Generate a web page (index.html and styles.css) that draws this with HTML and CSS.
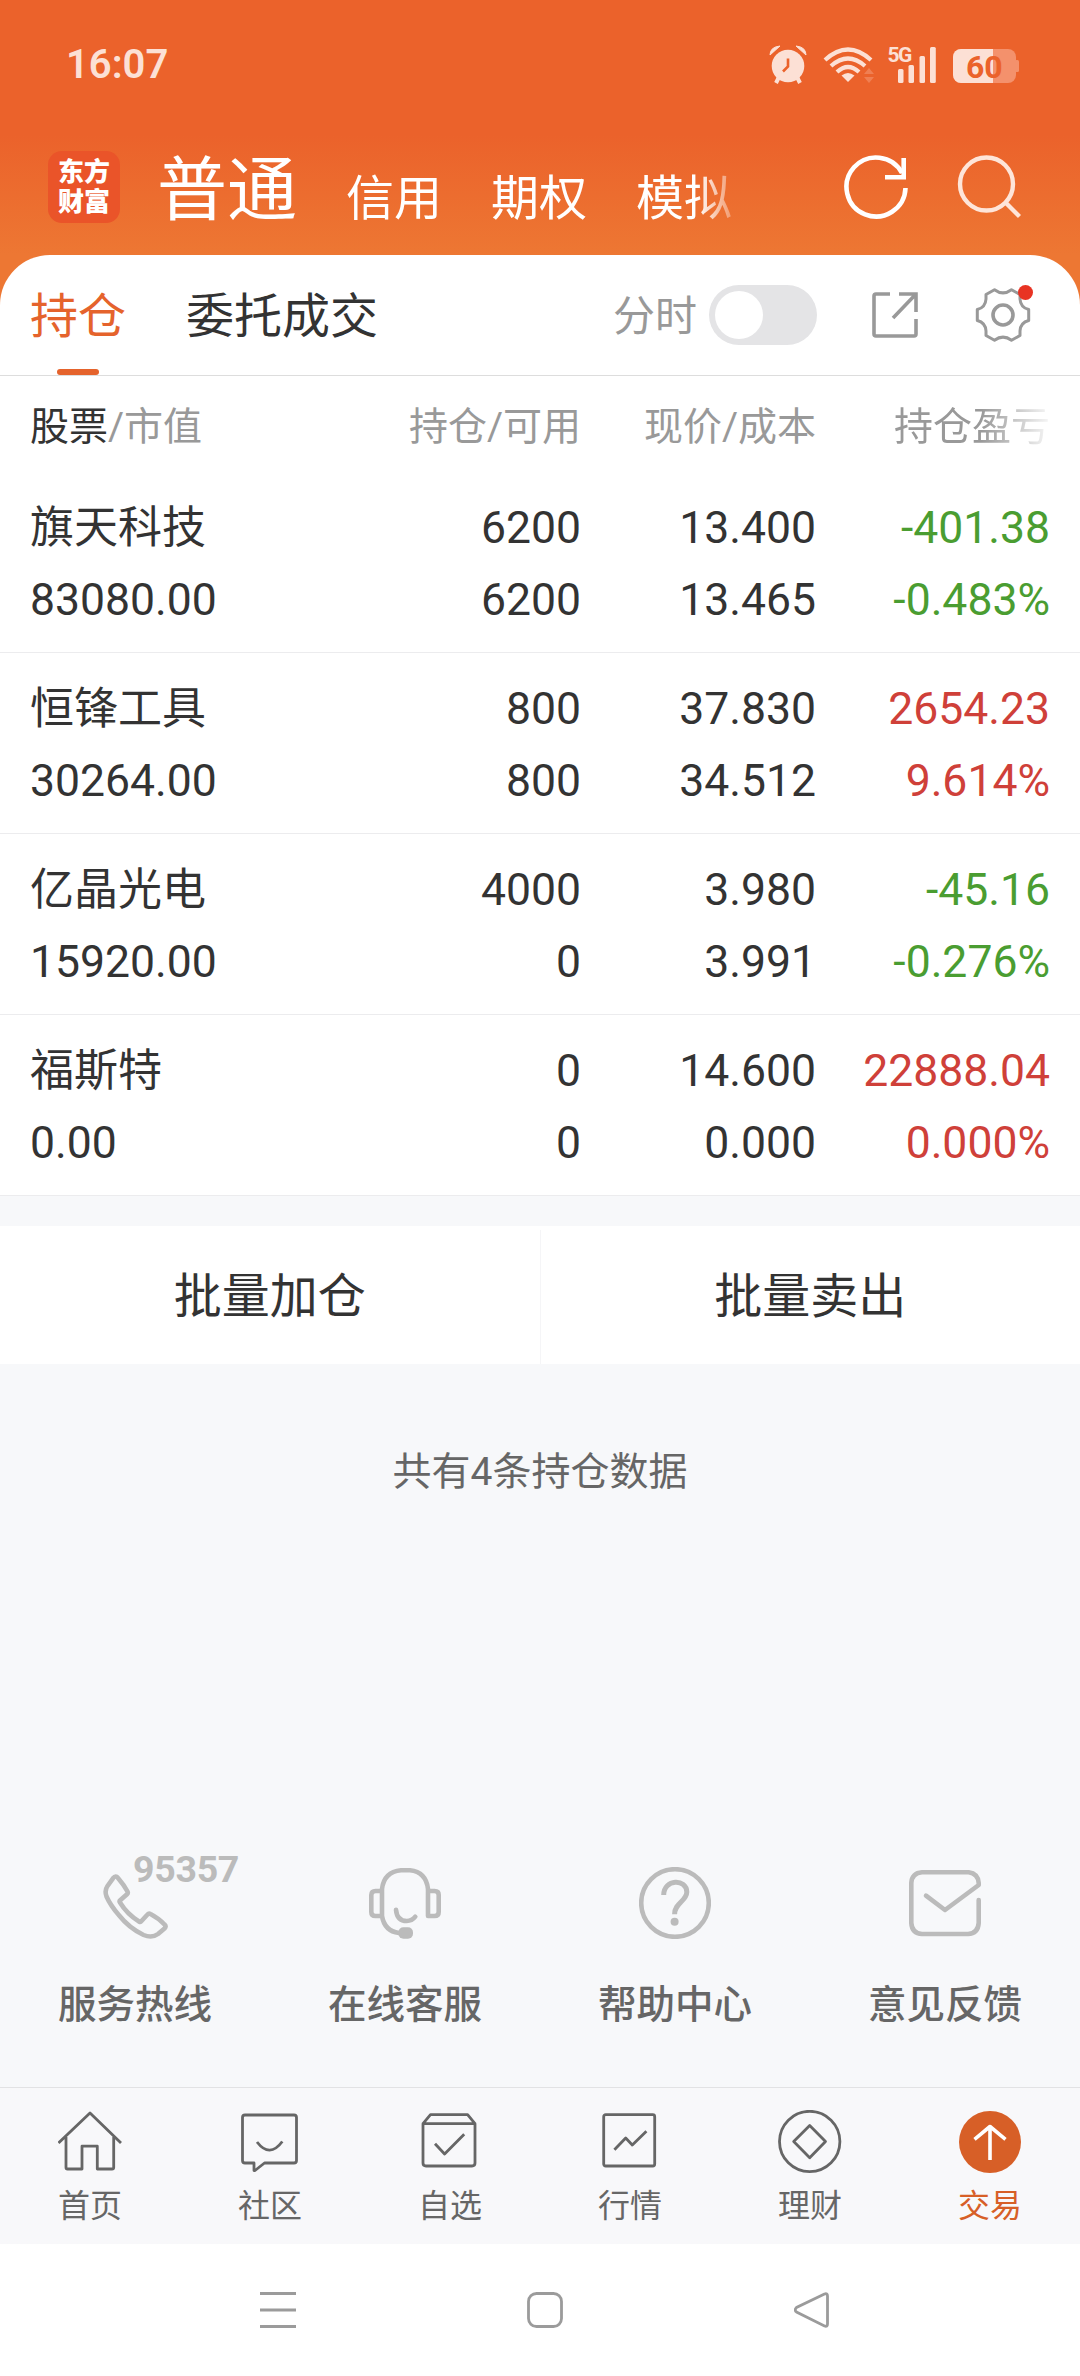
FILE: index.html
```html
<!DOCTYPE html>
<html lang="zh-CN">
<head>
    <meta charset="UTF-8">
    <meta name="viewport" content="width=device-width, initial-scale=1.0">
    <title>持仓</title>
    <link rel="stylesheet" href="styles.css">
</head>
<body>
    <div class="page">
        <div class="status-bar">
            <div class="time">16:07</div>
            <svg class="status-icons" width="256" height="44" viewBox="766 43 256 44">
                <g fill="#fce0d5">
                    <circle cx="788" cy="66" r="16.3"/>
                    <path d="M770 55q0-8 10-9zM806 55q0-8-10-9z" stroke="#fce0d5" stroke-linejoin="round"/>
                    <path d="M779 77l-3 6M797 77l3 6" stroke="#fce0d5" stroke-width="4"/>
                    <path d="M848 82l-6.500-6.500q6.500-5 13 0z"/>
                    <rect x="898" y="69" width="5.500" height="14" rx="1.500"/>
                    <rect x="908.500" y="65" width="5.500" height="18" rx="1.500"/>
                    <rect x="919.500" y="56" width="5.500" height="27" rx="1.500"/>
                    <rect x="930" y="47" width="5.800" height="36" rx="1.500"/>
                    <text x="887.500" y="62" class="net">5G</text>
                </g>
                <path d="M788 58.500v8l-5 5" fill="none" stroke="#eb622b" stroke-width="2.600"/>
                <g fill="none" stroke="#fce0d5" stroke-width="4.200">
                    <path d="M825 60q23-21 46 0M831 66q17-15 34 0M837 72q11-10 22 0"/>
                </g>
                <path d="M864 74l5-6 5 6zM864 77h10l-5 6z" fill="#f07f52"/>
                <rect x="953" y="49" width="63" height="34" rx="8" fill="#f4916c"/>
                <rect x="1015" y="60" width="4" height="12" rx="1.500" fill="#f4916c"/>
                <path d="M993 49h-32a8 8 0 0 0-8 8v18a8 8 0 0 0 8 8h32z" fill="#fce0d5"/>
                <text x="966" y="78" class="battery">60</text>
            </svg>
        </div>

        <div class="header">
            <div class="logo">东方<br>财富</div>
            <div class="accounts">
                <span class="current">普通</span>
                <span>信用</span>
                <span>期权</span>
                <span>模拟</span>
            </div>
            <svg class="refresh" width="66" height="66" viewBox="0 0 66 66" fill="none" stroke="#fff" stroke-width="4.600">
                <path d="M62.500 34A29.500 29.500 0 1 1 59 19"/>
                <path d="M60.700 4v19.300H42"/>
            </svg>
            <svg class="search" width="66" height="66" viewBox="0 0 66 66" fill="none" stroke="#fee5d9" stroke-width="4.400">
                <circle cx="31.500" cy="30" r="26.500"/>
                <path d="M50.500 48.500l14 14"/>
            </svg>
        </div>

        <div class="card">
            <div class="tabs">
                <div class="tab active">持仓</div>
                <div class="tab">委托成交</div>
                <div class="tools">
                    <span class="label">分时</span>
                    <div class="switch"></div>
                    <svg class="share" width="46" height="46" viewBox="0 0 46 46" fill="none" stroke="#999" stroke-width="3.600">
                        <path d="M18 2H4Q2 2 2 4v38q0 2 2 2h38q2 0 2-2V27"/>
                        <path d="M27 2h17v18M44 2L21 26"/>
                    </svg>
                    <div class="setting">
                        <svg width="56" height="56" viewBox="-28 -28 56 56" fill="none" stroke="#999" stroke-width="3" stroke-linejoin="round">
                            <circle r="10" stroke-width="3.600"/>
                            <path d="M-8.500-25.300Q0-19 8.500-25.300L17-20.500V-16Q17.500-7.500 25.700-5.500V5.500Q17.500 7.500 17 16V20.500L8.500 25.300Q0 19-8.500 25.300L-17 20.500V16Q-17.500 7.500-25.700 5.500V-5.500Q-17.500-7.500-17-16V-20.500Z"/>
                        </svg>
                        <i class="dot"></i>
                    </div>
                </div>
            </div>

            <div class="row head">
                <div><b>股票</b>/市值</div>
                <div>持仓/可用</div>
                <div>现价/成本</div>
                <div class="fade">持仓盈亏</div>
            </div>
            <div class="row">
                <div>旗天科技<br><span>83080.00</span></div>
                <div>6200<br>6200</div>
                <div>13.400<br>13.465</div>
                <div class="down">-401.38<br>-0.483%</div>
            </div>
            <div class="row">
                <div>恒锋工具<br><span>30264.00</span></div>
                <div>800<br>800</div>
                <div>37.830<br>34.512</div>
                <div class="up">2654.23<br>9.614%</div>
            </div>
            <div class="row">
                <div>亿晶光电<br><span>15920.00</span></div>
                <div>4000<br>0</div>
                <div>3.980<br>3.991</div>
                <div class="down">-45.16<br>-0.276%</div>
            </div>
            <div class="row">
                <div>福斯特<br><span>0.00</span></div>
                <div>0<br>0</div>
                <div>14.600<br>0.000</div>
                <div class="up">22888.04<br>0.000%</div>
            </div>
        </div>

        <div class="batch">
            <div>批量加仓</div>
            <div>批量卖出</div>
        </div>

        <div class="total">共有4条持仓数据</div>

        <div class="services">
            <div class="service">
                <svg width="72" height="72" viewBox="0 0 72 72">
                    <path d="M14 11.300Q16.700 8 19 11Q25 18 28.500 24.500Q29.300 26 28 27.200L21.500 33Q20 34 21 35.500Q28 47 40 54.500Q41.500 55.500 42.500 54L48.500 47.500Q49.800 46 51.500 47Q60 51.500 65.500 57.500Q67.500 59.500 65.500 61.500L59 67Q53 71.500 44.600 68Q30 61 19.800 48Q11.500 38.500 7.500 29.500Q5.300 23.500 8.500 19Z"/>
                </svg>
                <span class="phone-no">95357</span>
                <div>服务热线</div>
            </div>
            <div class="service">
                <svg width="72" height="72" viewBox="0 0 72 72">
                    <path d="M13 24H6.500Q2.300 24 2.300 28v17q0 4 4.200 4H13M59 24h6.500q4.200 0 4.200 4v17q0 4-4.200 4H59V22Q57 5 41 3.300H32Q15 5 13 22V49Q15.500 64 30 66"/>
                    <path d="M27 42.700Q28 54 37.700 54Q43 54 46.300 49.700"/>
                    <rect class="fill" x="29.400" y="60.300" width="14.600" height="11.400" rx="5"/>
                </svg>
                <div>在线客服</div>
            </div>
            <div class="service">
                <svg width="72" height="72" viewBox="0 0 72 72">
                    <circle cx="36" cy="36" r="33.800"/>
                    <path class="butt" d="M24.700 28C24.700 11.500 47.800 11.500 47.800 25C47.800 34 35.600 36 35.600 47.200"/>
                    <circle class="fill" cx="35.600" cy="54.700" r="4"/>
                </svg>
                <div>帮助中心</div>
            </div>
            <div class="service">
                <svg width="72" height="72" viewBox="0 0 72 72">
                    <path d="M17 28.700L36 43L69.700 18V16Q69 6.500 59.700 5.300H13Q3 6 2.300 16V56Q3 66.500 13 67H59Q69 66.500 69.700 56V33"/>
                </svg>
                <div>意见反馈</div>
            </div>
        </div>

        <div class="tabbar">
            <div class="item">
                <svg width="64" height="64" viewBox="0 0 64 64">
                    <path d="M.500 33L32 3L63 33M8 27V57.500Q8 59 9.500 59H24V36.200H39.300V59H54Q55.700 59 55.700 57.500V27"/>
                </svg>
                首页
            </div>
            <div class="item">
                <svg width="64" height="64" viewBox="0 0 64 64">
                    <path d="M7 5H56Q58.500 5 58.500 7.500V50.500Q58.500 53 56 53H26.500L17 60.500H16V53H7Q4.500 53 4.500 50.500V7.500Q4.500 5 7 5ZM19 32Q31.700 48.500 44.300 31.500"/>
                </svg>
                社区
            </div>
            <div class="item">
                <svg width="64" height="64" viewBox="0 0 64 64">
                    <path d="M5 13.700V53Q5 56 8 56H54Q57 56 57 53V13.700ZM5 13.700L12.500 4.700H49.600L57 13.700M17 33.700L26.600 44L46.200 24.300"/>
                </svg>
                自选
            </div>
            <div class="item">
                <svg width="64" height="64" viewBox="0 0 64 64">
                    <rect x="5.700" y="4.700" width="51" height="51.300" rx="2"/>
                    <path d="M16.400 39.700L27.700 28L34.300 35L48.400 21.300"/>
                </svg>
                行情
            </div>
            <div class="item">
                <svg width="64" height="64" viewBox="0 0 64 64">
                    <circle cx="31.700" cy="31.500" r="30.200"/>
                    <path d="M31.700 15.500L47.500 31.500L31.700 47.700L15.700 31.500Z"/>
                </svg>
                理财
            </div>
            <div class="item active">
                <svg width="64" height="64" viewBox="0 0 64 64">
                    <circle class="disc" cx="32" cy="32" r="31"/>
                    <path d="M32 50V17M16.500 29.300L32 16.500L47.500 29.300"/>
                </svg>
                交易
            </div>
        </div>

        <div class="sys-nav">
            <svg width="36" height="36" viewBox="0 0 36 36"><path d="M0 1.500H36M0 18H36M0 34.500H36"/></svg>
            <svg width="36" height="36" viewBox="0 0 36 36"><rect x="1.500" y="1.500" width="33" height="33" rx="8"/></svg>
            <svg width="36" height="36" viewBox="0 0 36 36"><path d="M30.500 2L2.500 15.500Q0 18 2.500 20L30.500 34Q33.500 35 33.500 32V4Q33.500 1 30.500 2Z"/></svg>
        </div>
    </div>
</body>
</html>
```

FILE: styles.css
```css
* {
    box-sizing: border-box;
}
body {
    margin: 0;
    font-family: Roboto, "Noto Sans CJK SC", sans-serif;
    color: #333;
    background: #f7f8fa;
}
svg {
    display: block;
    flex: none;
}
.page {
    width: 1080px;
    height: 2376px;
    display: flex;
    flex-direction: column;
    overflow: hidden;
    background: linear-gradient(#eb622b 0, #eb622b 135px, #ed7733 255px, #ed7733 320px, #f7f8fa 320px);
}

/* status bar */
.status-bar {
    height: 130px;
    padding: 0 58px 0 66px;
    display: flex;
    align-items: center;
    justify-content: space-between;
}
.time {
    font-size: 40px;
    font-weight: 600;
    line-height: 48px;
    color: #fce0d5;
}
.net {
    font-size: 21px;
    font-weight: 700;
    letter-spacing: -1.5px;
}
.battery {
    font-size: 32px;
    font-weight: 700;
    fill: #eb622b;
}

/* header */
.header {
    height: 125px;
    padding: 0 59px 11px 48px;
    display: flex;
    align-items: center;
    color: #fff;
}
.logo {
    width: 72px;
    height: 72px;
    padding-top: 6px;
    border-radius: 14px;
    background: #ea5429;
    font-size: 26px;
    font-weight: 900;
    line-height: 30px;
    text-align: center;
}
.accounts {
    width: 625px;
    margin-left: 37px;
    padding-top: 15px;
    display: flex;
    align-items: baseline;
    gap: 49px;
    font-size: 48px;
    line-height: 80px;
    white-space: nowrap;
    -webkit-mask-image: linear-gradient(90deg, #000 540px, transparent 590px);
    mask-image: linear-gradient(90deg, #000 540px, transparent 590px);
}
.accounts .current {
    font-size: 70px;
}
.refresh {
    margin-left: 61px;
}
.search {
    margin-left: auto;
}

/* card */
.card {
    background: #fff;
    border-radius: 50px 50px 0 0;
}
.tabs {
    height: 121px;
    padding: 0 49px 0 30px;
    display: flex;
    gap: 60px;
    border-bottom: 1px solid #ddd;
}
.tab {
    padding-top: 3px;
    font-size: 48px;
    line-height: 117px;
    height: 120px;
    position: relative;
}
.tab.active {
    color: #e5632c;
}
.tab.active::after {
    content: "";
    position: absolute;
    left: 27px;
    bottom: 0;
    width: 42px;
    height: 6px;
    border-radius: 3px;
    background: #e5632c;
}
.tools {
    margin-left: auto;
    display: flex;
    align-items: center;
}
.tools .label {
    padding-top: 4px;
    font-size: 42px;
    line-height: 116px;
    color: #999;
}
.switch {
    width: 108px;
    height: 60px;
    margin-left: 12px;
    padding: 6px;
    border-radius: 30px;
    background: #e4e4e6;
}
.switch::before {
    content: "";
    display: block;
    width: 48px;
    height: 48px;
    border-radius: 50%;
    background: #fff;
}
.share {
    margin-left: 55px;
}
.setting {
    margin-left: 57px;
    position: relative;
}
.dot {
    position: absolute;
    top: -2px;
    right: -2px;
    width: 15px;
    height: 15px;
    border-radius: 50%;
    background: #e83323;
}

.row {
    height: 181px;
    padding: 20px 30px 0;
    display: grid;
    grid-template-columns: 251px 300px 235px 1fr;
    font-size: 44.5px;
    line-height: 72px;
    text-align: right;
    border-bottom: 1px solid #ececee;
}
.row div:first-child {
    text-align: left;
    font-size: 44px;
}
.row div:first-child span {
    font-size: 44.5px;
}
.row.head {
    height: 96px;
    padding-top: 15px;
    font-size: 39px;
    color: #999;
    border: none;
}
.row.head div:first-child {
    font-size: 39px;
}
.row.head b {
    font-weight: 400;
    color: #333;
}
.row .fade {
    -webkit-mask-image: linear-gradient(90deg, #000 165px, transparent 240px);
    mask-image: linear-gradient(90deg, #000 165px, transparent 240px);
}
.up {
    color: #cf4039;
}
.down {
    color: #4a9d31;
}

.batch {
    height: 138px;
    margin-top: 30px;
    padding-top: 4px;
    display: flex;
    background: #fff;
    font-size: 48px;
    line-height: 134px;
    text-align: center;
}
.batch div {
    flex: 1;
}
.batch div:first-child {
    border-right: 1px solid #f5f5f7;
}
.total {
    padding-top: 78px;
    font-size: 39px;
    line-height: 60px;
    text-align: center;
    color: #666;
}

/* services */
.services {
    margin-top: auto;
    height: 220px;
    display: flex;
}
.service {
    flex: 1;
    display: flex;
    flex-direction: column;
    align-items: center;
    position: relative;
    font-size: 38.5px;
    font-weight: 500;
    line-height: 60px;
    color: #666;
}
.service svg {
    margin-bottom: 36px;
    fill: none;
    stroke: #bbb;
    stroke-width: 4.6;
    stroke-linecap: round;
    stroke-linejoin: round;
}
.service .butt {
    stroke-linecap: butt;
    stroke-width: 5;
}
.service .fill {
    fill: #bbb;
    stroke: none;
}
.phone-no {
    position: absolute;
    left: 133px;
    top: -20px;
    font-size: 37.5px;
    font-weight: 700;
    line-height: 44px;
    letter-spacing: -0.3px;
    color: #bbb;
}

/* bottom tabs */
.tabbar {
    height: 157px;
    padding-top: 22px;
    display: flex;
    border-top: 1px solid #e2e2e4;
    background: #f8f8fa;
}
.item {
    flex: 1;
    display: flex;
    flex-direction: column;
    align-items: center;
    gap: 8px;
    font-size: 32px;
    line-height: 48px;
    color: #666;
}
.item svg {
    fill: none;
    stroke: #666;
    stroke-width: 2.8;
    stroke-linejoin: round;
}
.item.active {
    color: #d75f27;
}
.item.active svg {
    stroke: #fff;
    stroke-width: 3.6;
}
.item .disc {
    fill: #d75f27;
    stroke: none;
}

.sys-nav {
    height: 132px;
    padding: 48px 250px 0 260px;
    display: flex;
    justify-content: space-between;
    background: #fff;
}
.sys-nav svg {
    fill: none;
    stroke: #9b9b9b;
    stroke-width: 2.8;
}
```
